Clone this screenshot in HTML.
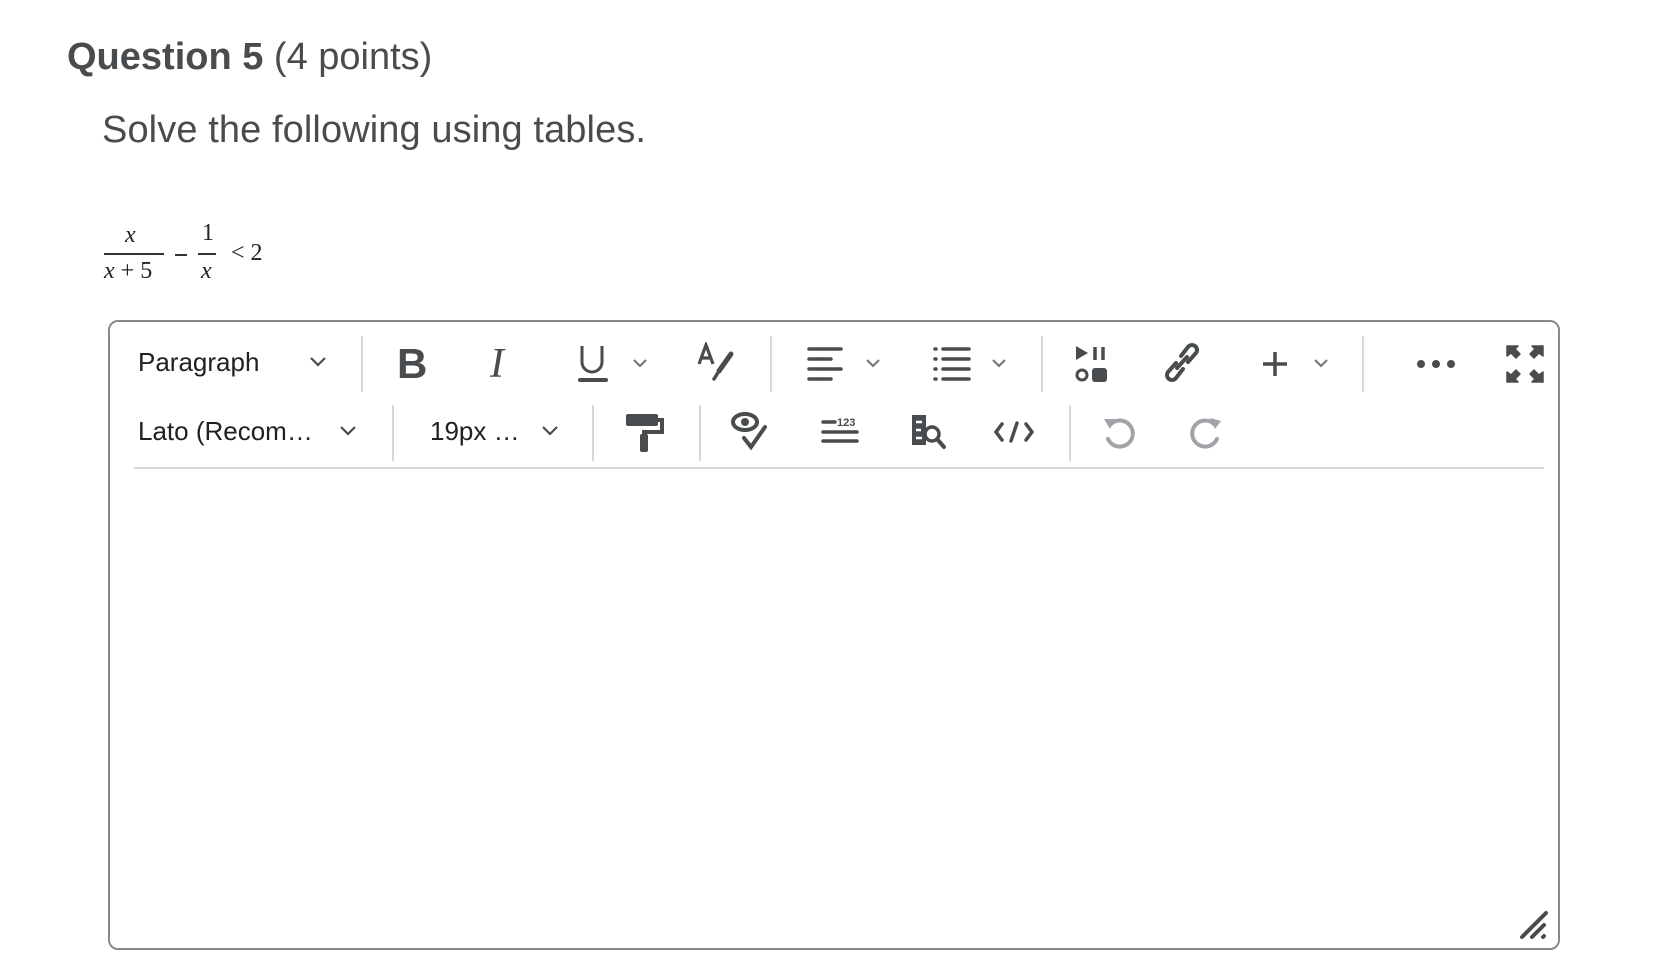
<!DOCTYPE html>
<html><head><meta charset="utf-8"><style>
body{margin:0;width:1677px;height:966px;background:#fff;position:relative;overflow:hidden;font-family:"Liberation Sans",sans-serif;color:#494c4e}
.abs{position:absolute}
.t1{left:67px;top:36px;font-size:38px;letter-spacing:0;white-space:nowrap}
.t2{left:102px;top:109px;font-size:38px;letter-spacing:0.1px;white-space:nowrap}
.m{font-family:"Liberation Serif",serif;font-size:24px;color:#222}
.box{left:108px;top:320px;width:1452px;height:630px;border:2px solid #868a8e;border-radius:10px;box-sizing:border-box}
.sep{width:2px;background:#d3d9de}
.lbl{font-size:26px;color:#202122;white-space:nowrap}
svg.i{position:absolute}
</style></head><body>
<div class="abs t1"><b>Question 5</b> (4 points)</div>
<div class="abs t2">Solve the following using tables.</div>

<div class="abs m" style="left:125px;top:222px;font-style:italic">x</div>
<div class="abs" style="left:104px;top:253px;width:60px;height:2px;background:#333"></div>
<div class="abs m" style="left:104px;top:258px;white-space:nowrap"><i>x</i> + 5</div>
<div class="abs" style="left:175px;top:254px;width:12px;height:2px;background:#333"></div>
<div class="abs m" style="left:202px;top:220px">1</div>
<div class="abs" style="left:198px;top:253px;width:18px;height:2px;background:#333"></div>
<div class="abs m" style="left:201px;top:258px;font-style:italic">x</div>
<div class="abs m" style="left:231px;top:240px;white-space:nowrap">&lt; 2</div>

<div class="abs box"></div>
<div class="abs" style="left:134px;top:467px;width:1410px;height:2px;background:#d3d9de"></div>

<div class="abs sep" style="left:361px;top:336px;height:56px"></div>
<div class="abs sep" style="left:770px;top:336px;height:56px"></div>
<div class="abs sep" style="left:1041px;top:336px;height:56px"></div>
<div class="abs sep" style="left:1362px;top:336px;height:56px"></div>
<div class="abs sep" style="left:392px;top:405px;height:56px"></div>
<div class="abs sep" style="left:592px;top:405px;height:56px"></div>
<div class="abs sep" style="left:699px;top:405px;height:56px"></div>
<div class="abs sep" style="left:1069px;top:405px;height:56px"></div>

<div class="abs lbl" style="left:138px;top:347px">Paragraph</div>
<div class="abs lbl" style="left:138px;top:416px">Lato (Recom…</div>
<div class="abs lbl" style="left:430px;top:416px">19px …</div>

<svg class="i" style="left:308px;top:355px" width="20" height="14"><path d="M3 3l7 7 7-7" fill="none" stroke="#494c4e" stroke-width="2.2"/></svg>
<svg class="i" style="left:338px;top:424px" width="20" height="14"><path d="M3 3l7 7 7-7" fill="none" stroke="#494c4e" stroke-width="2.2"/></svg>
<svg class="i" style="left:540px;top:424px" width="20" height="14"><path d="M3 3l7 7 7-7" fill="none" stroke="#494c4e" stroke-width="2.2"/></svg>
<svg class="i" style="left:631px;top:357px" width="18" height="12"><path d="M3 3l6 6 6-6" fill="none" stroke="#6e7376" stroke-width="2"/></svg>
<svg class="i" style="left:864px;top:357px" width="18" height="12"><path d="M3 3l6 6 6-6" fill="none" stroke="#6e7376" stroke-width="2"/></svg>
<svg class="i" style="left:990px;top:357px" width="18" height="12"><path d="M3 3l6 6 6-6" fill="none" stroke="#6e7376" stroke-width="2"/></svg>
<svg class="i" style="left:1312px;top:357px" width="18" height="12"><path d="M3 3l6 6 6-6" fill="none" stroke="#6e7376" stroke-width="2"/></svg>

<div class="abs" style="left:397px;top:340px;font-size:42px;font-weight:bold;color:#494c4e">B</div>
<div class="abs" style="left:490px;top:340px;font-size:42px;font-style:italic;font-family:'Liberation Serif',serif;color:#494c4e">I</div>
<svg class="i" style="left:576px;top:344px" width="38" height="40"><path d="M6 2v16a10 10 0 0 0 20 0V2" fill="none" stroke="#494c4e" stroke-width="3"/><rect x="2" y="34" width="30" height="4" rx="2" fill="#494c4e"/></svg>
<svg class="i" style="left:697px;top:342px" width="42" height="42"><path d="M2 22L9 3l7 19M4.5 16h9" fill="none" stroke="#494c4e" stroke-width="3.2"/><path d="M34 12l-12 17" stroke="#494c4e" stroke-width="5" stroke-linecap="round"/><path d="M22 29l-5 8" stroke="#494c4e" stroke-width="3.5" stroke-linecap="round"/></svg>
<svg class="i" style="left:806px;top:345px" width="40" height="38"><g stroke="#494c4e" stroke-width="3.5" stroke-linecap="round"><path d="M3 4h32M3 14h22M3 24h32M3 34h22"/></g></svg>
<svg class="i" style="left:933px;top:345px" width="40" height="38"><g stroke="#494c4e" stroke-width="3.5" stroke-linecap="round"><path d="M2 4h1M10 4h26M2 14h1M10 14h26M2 24h1M10 24h26M2 34h1M10 34h26"/></g></svg>
<svg class="i" style="left:1073px;top:344px" width="40" height="40"><path d="M3 2l12 7-12 7z" fill="#494c4e"/><path d="M22 3v13M30 3v13" stroke="#494c4e" stroke-width="3.5"/><circle cx="9" cy="31" r="5" fill="none" stroke="#494c4e" stroke-width="3"/><rect x="19" y="24" width="15" height="14" rx="3" fill="#494c4e"/></svg>
<svg class="i" style="left:1161px;top:342px" width="42" height="42"><g fill="none" stroke="#494c4e" stroke-width="4" stroke-linecap="round"><path d="M20 14l7-9a5 5 0 0 1 8 6l-8 9"/><path d="M22 27l-7 9a5 5 0 0 1-8-6l8-9"/><path d="M16 26l10-11"/></g></svg>
<svg class="i" style="left:1261px;top:350px" width="28" height="28"><path d="M14 2v24M2 14h24" stroke="#494c4e" stroke-width="3.5"/></svg>
<svg class="i" style="left:1416px;top:358px" width="40" height="12"><g fill="#494c4e"><circle cx="5" cy="6" r="4"/><circle cx="20" cy="6" r="4"/><circle cx="35" cy="6" r="4"/></g></svg>
<svg class="i" style="left:1505px;top:344px" width="40" height="40"><g fill="#494c4e" stroke="#494c4e" stroke-width="1.5" stroke-linejoin="round"><path d="M2 2h11l-3 3 5 5-4 4-5-5-4 3z"/><path d="M38 2H27l3 3-5 5 4 4 5-5 4 3z"/><path d="M2 38h11l-3-3 5-5-4-4-5 5-4-3z"/><path d="M38 38H27l3-3-5-5 4-4 5 5 4-3z"/></g></svg>

<svg class="i" style="left:624px;top:412px" width="42" height="42"><rect x="2" y="2" width="32" height="12" rx="2" fill="#494c4e"/><path d="M34 8h4v12H20v18" fill="none" stroke="#494c4e" stroke-width="4"/><rect x="16" y="22" width="8" height="18" rx="2" fill="#494c4e"/></svg>
<svg class="i" style="left:730px;top:412px" width="42" height="42"><ellipse cx="15" cy="10" rx="12" ry="8" fill="none" stroke="#494c4e" stroke-width="4"/><circle cx="15" cy="10" r="4" fill="#494c4e"/><path d="M14 26l7 9 14-20" fill="none" stroke="#494c4e" stroke-width="4" stroke-linecap="round"/></svg>
<svg class="i" style="left:820px;top:416px" width="44" height="36"><g stroke="#494c4e" stroke-width="3.5" stroke-linecap="round"><path d="M3 6h12M3 16h34M3 25h34"/></g><text x="17" y="10" font-size="11" font-weight="bold" fill="#494c4e" font-family="Liberation Sans">123</text></svg>
<svg class="i" style="left:908px;top:413px" width="42" height="42"><path d="M4 2h14v30H4z" fill="#494c4e"/><path d="M8 9h6M8 17h5M8 25h6" stroke="#fff" stroke-width="2.5"/><circle cx="24" cy="21" r="7" fill="#fff" stroke="#494c4e" stroke-width="3.5"/><path d="M29 26l7 8" stroke="#494c4e" stroke-width="4" stroke-linecap="round"/></svg>
<svg class="i" style="left:993px;top:420px" width="42" height="24"><g fill="none" stroke="#494c4e" stroke-width="3.5" stroke-linecap="round"><path d="M9 4L3 12l6 8M33 4l6 8-6 8M24 3l-6 18"/></g></svg>
<svg class="i" style="left:1100px;top:413px" width="40" height="42"><path d="M10 12a13 13 0 1 1-2 14" fill="none" stroke="#a0a4a8" stroke-width="4" stroke-linecap="round"/><path d="M4 6l11 0-5 10z" fill="#a0a4a8"/></svg>
<svg class="i" style="left:1185px;top:413px" width="40" height="42"><path d="M30 12a13 13 0 1 0 2 14" fill="none" stroke="#a0a4a8" stroke-width="4" stroke-linecap="round"/><path d="M36 8l-11-3 5 11z" fill="#a0a4a8"/></svg>

<svg class="i" style="left:1518px;top:908px" width="34" height="34"><g stroke="#494c4e" stroke-width="4" stroke-linecap="round"><path d="M4 29L28 5M14 29l12-12M25 29l1-1"/></g></svg>
</body></html>
